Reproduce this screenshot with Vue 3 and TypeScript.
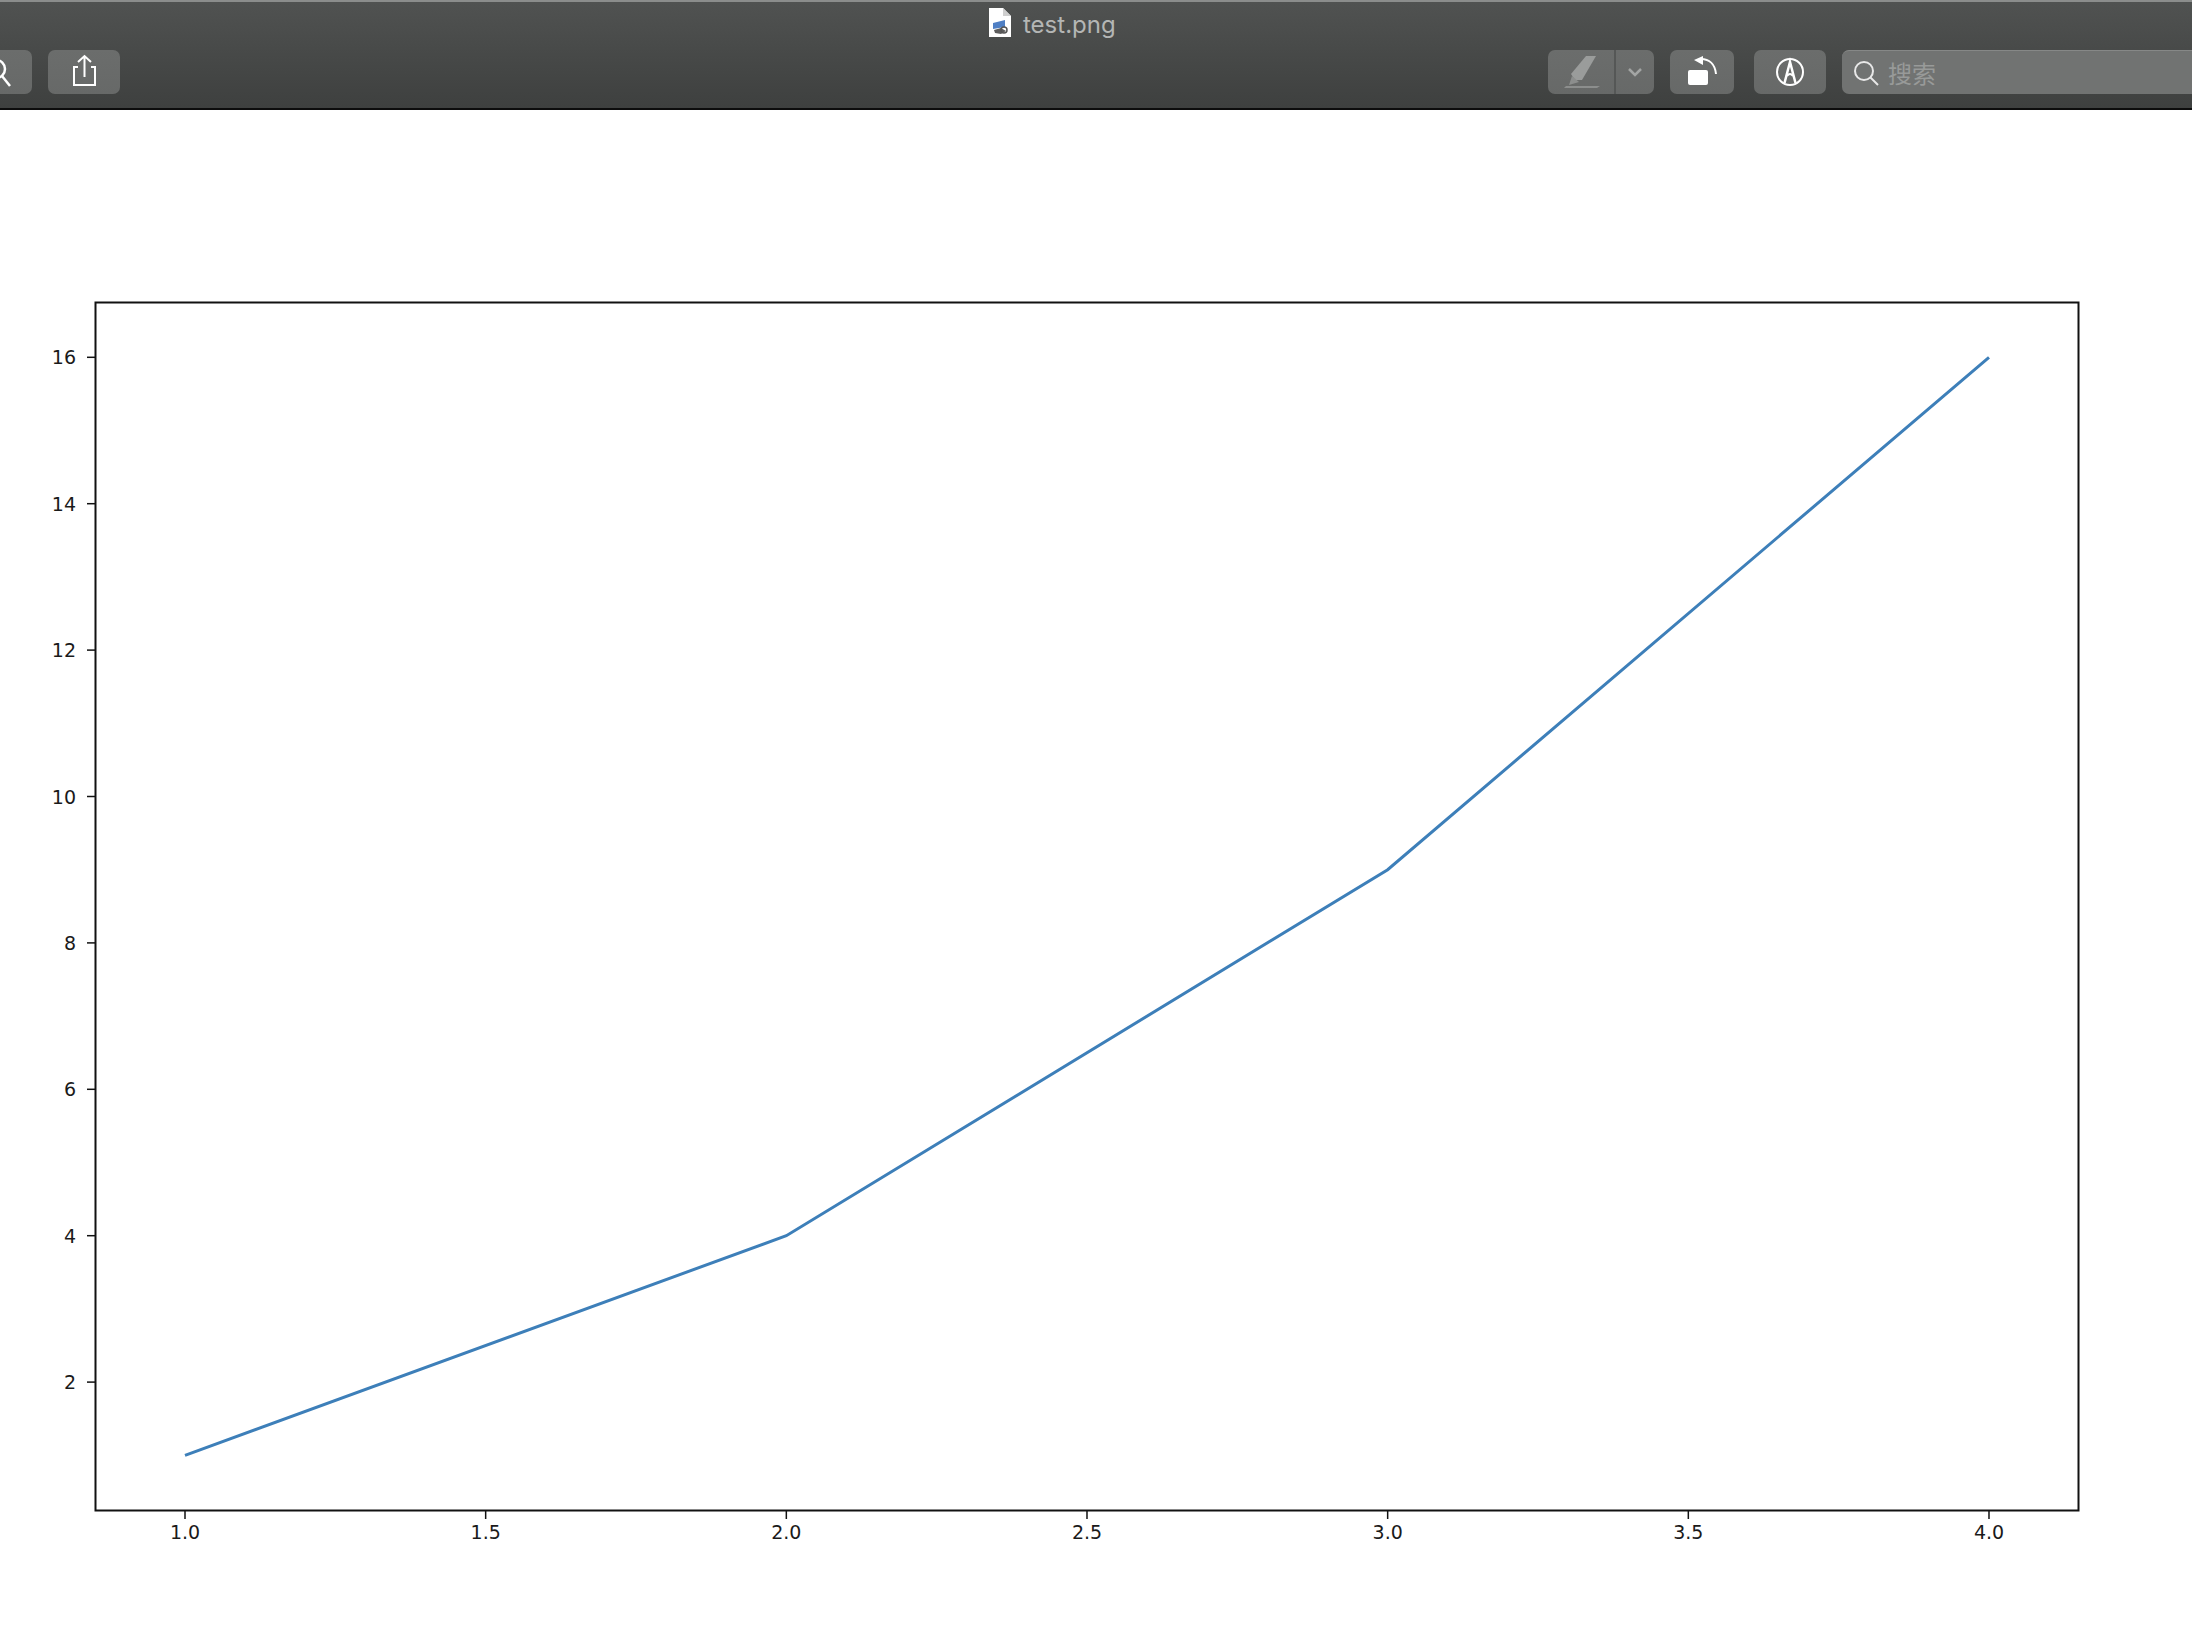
<script setup lang="ts">
const xOf = (v: number) => 185 + (v - 1) * 601.33
const yOf = (v: number) => 1455.3 - (v - 1) * 73.2
const xTicks = [1, 1.5, 2, 2.5, 3, 3.5, 4]
const yTicks = [2, 4, 6, 8, 10, 12, 14, 16]
const points = [[1, 1], [2, 4], [3, 9], [4, 16]]
  .map(([x, y]) => `${xOf(x)},${yOf(y)}`)
  .join(' ')
</script>

<template>
  <div class="page">
    <header class="toolbar">
      <div class="title">
        <svg class="file" width="24" height="30" viewBox="0 0 24 30">
          <path d="M1 0H15L23 8V29H1Z" fill="#fff" />
          <path d="M15 0L23 8H15Z" fill="#cfcfcf" />
          <path d="M5 15L17 12V19L5 21Z" fill="#4f7fc4" />
          <path d="M6 22L13 20L18 23L13 26L7 25Z" fill="#5d5d5d" />
          <circle cx="16" cy="22" r="3" fill="none" stroke="#555" stroke-width="1.5" />
        </svg>
        <span>test.png</span>
      </div>
      <div class="controls">
        <div class="group">
          <div class="btn zoom">
            <svg width="72" height="44" viewBox="0 0 72 44">
              <circle cx="36" cy="19" r="9" fill="none" stroke="#fff" stroke-width="2.5" />
              <path d="M42 26L50 36" stroke="#fff" stroke-width="2.5" fill="none" />
            </svg>
          </div>
          <div class="btn share">
            <svg width="72" height="44" viewBox="0 0 72 44">
              <path d="M30 17H26V35H47V17H43" fill="none" stroke="#fff" stroke-width="2" />
              <path d="M36.500 6V27M30 12L36.500 6L43 12" fill="none" stroke="#fff" stroke-width="2" />
            </svg>
          </div>
        </div>
        <div class="group right">
          <div class="btn marker">
            <div class="marker-main">
              <svg width="66" height="44" viewBox="0 0 66 44">
                <path d="M23 24L38 6H48L34 30H27Z" fill="#9a9c9b" />
                <path d="M24 26L31 32L21 35Z" fill="#8c8e8d" />
                <path d="M18 36H52L49 38H16Z" fill="#8c8e8d" />
              </svg>
            </div>
            <div class="marker-caret">
              <svg width="38" height="44" viewBox="0 0 38 44">
                <path d="M13 19L19 25L25 19" fill="none" stroke="#a3a5a4" stroke-width="2.500" />
              </svg>
            </div>
          </div>
          <div class="btn rotate">
            <svg width="64" height="44" viewBox="0 0 64 44">
              <rect x="18" y="20" width="20" height="15" rx="2" fill="#fff" />
              <path d="M31 9C39 9 45 14 46 24" fill="none" stroke="#fff" stroke-width="2" />
              <path d="M33 6V15L24 10Z" fill="#fff" />
            </svg>
          </div>
          <div class="btn markup">
            <svg width="72" height="44" viewBox="0 0 72 44">
              <circle cx="36" cy="22" r="13" fill="none" stroke="#fff" stroke-width="2" />
              <path d="M30.500 33L36 12L41.500 33" fill="none" stroke="#fff" stroke-width="2.500" />
              <path d="M33 26Q36 22 39 26" fill="none" stroke="#fff" stroke-width="2" />
            </svg>
          </div>
          <div class="search">
            <svg width="26" height="26" viewBox="0 0 26 26">
              <circle cx="11" cy="11" r="9" fill="none" stroke="#e8e8e8" stroke-width="2" />
              <path d="M17.500 17.500L25 25" stroke="#e8e8e8" stroke-width="2" fill="none" />
            </svg>
            <span>搜索</span>
          </div>
        </div>
      </div>
    </header>

    <svg class="chart" width="2192" height="1522" viewBox="0 110 2192 1522">
      <rect x="95.500" y="302.500" width="1983" height="1208" fill="none" stroke="#111" stroke-width="2" />
      <g v-for="t in xTicks" :key="'x' + t">
        <line :x1="xOf(t)" :x2="xOf(t)" y1="1511" y2="1519" stroke="#111" stroke-width="1.500" />
        <text class="tick" :x="xOf(t)" y="1539" text-anchor="middle">{{ t.toFixed(1) }}</text>
      </g>
      <g v-for="t in yTicks" :key="'y' + t">
        <line x1="87" x2="95" :y1="yOf(t)" :y2="yOf(t)" stroke="#111" stroke-width="1.500" />
        <text class="tick" x="76" :y="yOf(t) + 7" text-anchor="end">{{ t }}</text>
      </g>
      <polyline :points="points" fill="none" stroke="#3d7fb9" stroke-width="3" />
    </svg>
  </div>
</template>

<style scoped>
.page {
  width: 2192px;
  height: 1632px;
  overflow: hidden;
  background: #fff;
}
.toolbar {
  height: 110px;
  box-sizing: border-box;
  border-top: 2px solid #8b8d8c;
  border-bottom: 2px solid #0c0c0c;
  background: linear-gradient(#505251, #3e403f);
  display: flex;
  flex-direction: column;
}
.title {
  height: 46px;
  padding-left: 988px;
  box-sizing: border-box;
  display: flex;
  align-items: center;
  gap: 11px;
  color: #b4b6b5;
  font: 24px/30px Inter, "Liberation Sans", sans-serif;
}
.file {
  margin-top: -4px;
}
.controls {
  margin-top: 2px;
  display: flex;
  justify-content: space-between;
}
.group {
  display: flex;
}
.btn {
  height: 44px;
  border-radius: 7px;
  background: linear-gradient(#6b6d6c, #676968);
  display: flex;
}
.zoom {
  width: 72px;
  margin-left: -40px;
}
.share {
  width: 72px;
  margin-left: 16px;
}
.marker {
  width: 106px;
}
.marker-main {
  width: 66px;
  border-right: 2px solid #555756;
}
.rotate {
  width: 64px;
  margin-left: 16px;
}
.markup {
  width: 72px;
  margin-left: 20px;
}
.search {
  width: 350px;
  height: 44px;
  margin-left: 16px;
  padding-left: 11px;
  box-sizing: border-box;
  border-radius: 7px 0 0 7px;
  border-top: 1px solid #868887;
  background: #717372;
  display: flex;
  align-items: center;
  gap: 9px;
  color: #989a99;
  font: 24px/30px "Noto Sans CJK SC", sans-serif;
}
.chart {
  display: block;
}
.tick {
  font: 19px "DejaVu Sans", sans-serif;
  fill: #1a1a1a;
}
</style>
